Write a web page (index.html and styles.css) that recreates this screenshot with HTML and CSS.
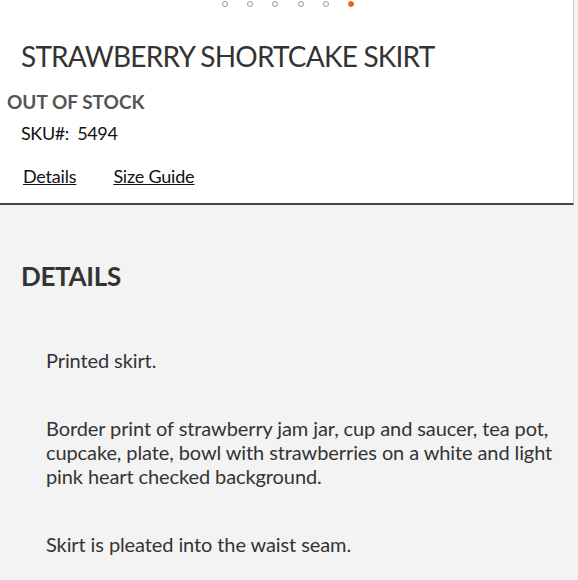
FILE: index.html
```html
<!DOCTYPE html>
<html lang="en">
<head>
    <meta charset="UTF-8">
    <meta name="viewport" content="width=device-width, initial-scale=1.0">
    <title>Strawberry Shortcake Skirt</title>
    <link rel="stylesheet" href="styles.css">
</head>
<body>
    <div class="product-top">
        <div class="slider-dots">
            <span class="dot"></span>
            <span class="dot"></span>
            <span class="dot"></span>
            <span class="dot"></span>
            <span class="dot"></span>
            <span class="dot active"></span>
        </div>

        <h1 class="product-title">STRAWBERRY SHORTCAKE SKIRT</h1>
        <div class="stock-status">OUT OF STOCK</div>
        <div class="sku">SKU#:&nbsp; 5494</div>

        <div class="tabs">
            <a href="#details" class="tab-link">Details</a>
            <a href="#size-guide" class="tab-link">Size Guide</a>
        </div>
    </div>

    <div class="details-panel" id="details">
        <h2 class="details-title">DETAILS</h2>
        <div class="details-body">
            <p>Printed skirt.</p>
            <p>Border print of strawberry jam jar, cup and saucer, tea pot, cupcake, plate, bowl with strawberries on a white and light pink heart checked background.</p>
            <p>Skirt is pleated into the waist seam.</p>
        </div>
    </div>
</body>
</html>
```

FILE: styles.css
```css
* {
    margin: 0;
    padding: 0;
    box-sizing: border-box;
}

body {
    font-family: Lato, "Open Sans", sans-serif;
    background-color: #f3f3f3;
    color: #333;
}

.product-top {
    background-color: #fff;
    width: 574px;
    border-right: 1px solid #ccc;
    border-bottom: 2px solid #444;
    padding-bottom: 15px;
}

.slider-dots {
    display: flex;
    gap: 19.2px;
    padding-left: 222px;
    padding-top: 1px;
    height: 8px;
}

.dot {
    width: 6px;
    height: 6px;
    border-radius: 50%;
    border: 1.5px solid #999;
}

.dot.active {
    background-color: #e8641e;
    border-color: #e8641e;
}

.product-title {
    font-weight: 400;
    font-size: 28px;
    letter-spacing: -0.8px;
    color: #333;
    margin-top: 30px;
    padding-left: 21px;
    line-height: 36px;
}

.stock-status {
    font-weight: 700;
    font-size: 19px;
    color: #555;
    padding-left: 7px;
    margin-top: 16px;
    line-height: 24px;
}

.sku {
    font-size: 18px;
    letter-spacing: -0.4px;
    color: #111;
    padding-left: 21px;
    margin-top: 7px;
    line-height: 24px;
}

.tabs {
    display: flex;
    gap: 37px;
    padding-left: 23px;
    margin-top: 19px;
}

.tab-link {
    font-size: 18px;
    letter-spacing: -0.2px;
    color: #111;
    text-decoration: underline;
    line-height: 24px;
}

.details-panel {
    padding: 55px 20px 40px 21px;
}

.details-title {
    font-size: 26px;
    letter-spacing: -0.3px;
    font-weight: 700;
    color: #333;
    line-height: 32px;
}

.details-body {
    padding-left: 25px;
    padding-top: 56px;
}

.details-body p {
    font-size: 20px;
    letter-spacing: -0.1px;
    line-height: 24px;
    color: #333;
    margin-bottom: 44px;
}
```
